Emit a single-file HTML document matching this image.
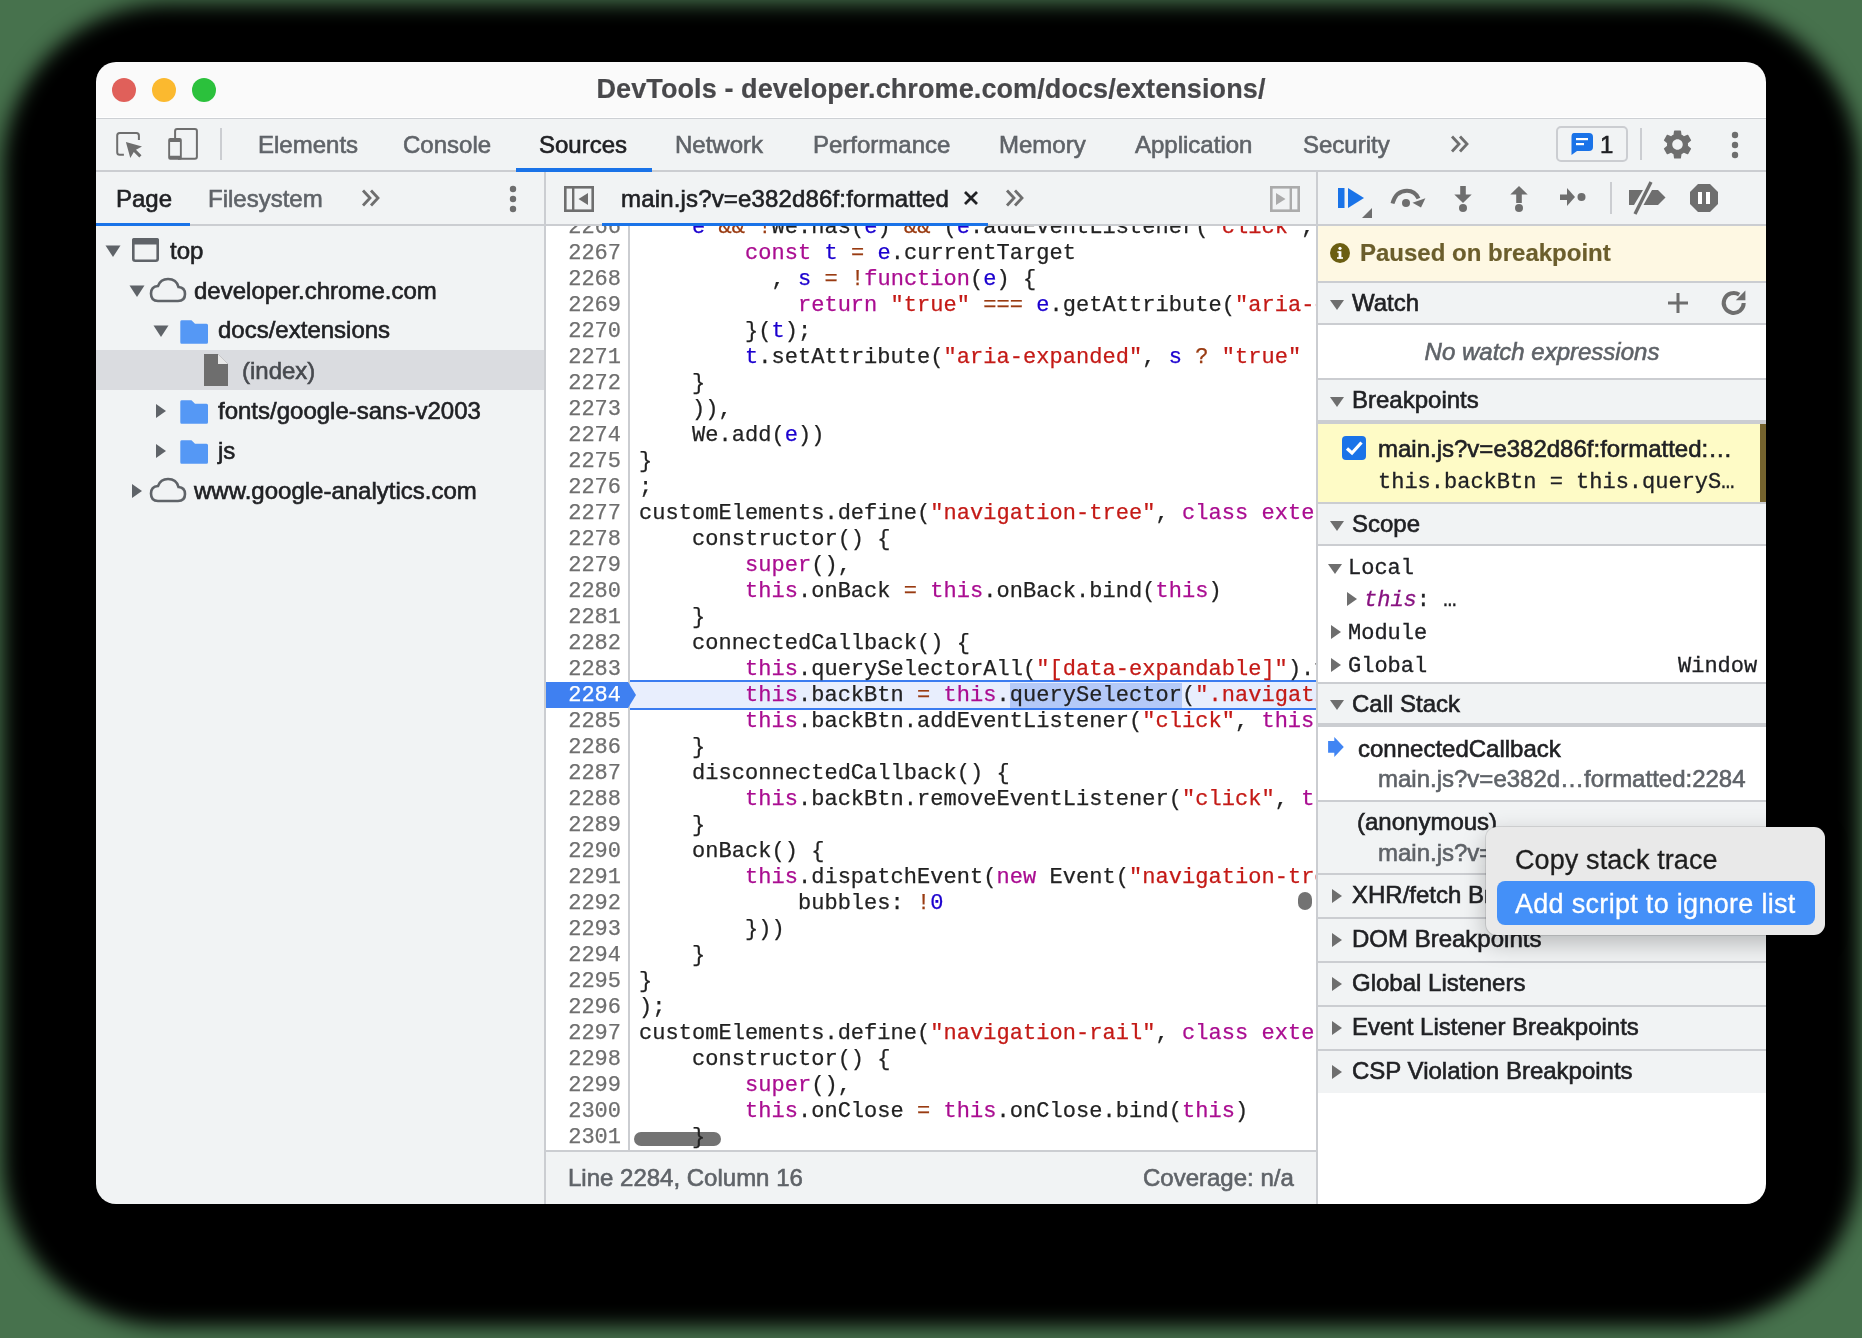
<!DOCTYPE html>
<html><head><meta charset="utf-8">
<style>
html,body{margin:0;padding:0;}
body{width:1862px;height:1338px;overflow:hidden;position:relative;background:#47724d;font-family:"Liberation Sans",sans-serif;}
.abs{position:absolute;}
#shadow{position:absolute;left:3px;top:4px;width:1856px;height:1322px;border-radius:165px;background:#000;filter:blur(10px);}
#win{will-change:transform;position:absolute;left:0;top:0;width:1862px;height:1338px;clip-path:inset(62px 96px 134px 96px round 20px);background:#f1f3f4;}
.t{position:absolute;white-space:pre;font-size:24px;color:#5f6368;line-height:30px;-webkit-text-stroke-width:0.6px;}
.m{font-family:"Liberation Mono",monospace;-webkit-text-stroke-width:0.3px;}
.hl{position:absolute;background:#cbcdd1;}
#ed{position:absolute;left:546px;top:226px;width:770px;height:924px;overflow:hidden;background:#fff;}
.ln{position:absolute;left:0;width:75px;text-align:right;font-family:"Liberation Mono",monospace;font-size:22px;line-height:26px;color:#6f6f6f;white-space:pre;-webkit-text-stroke-width:0.25px;}
.cl{position:absolute;left:93px;font-family:"Liberation Mono",monospace;font-size:22px;line-height:26px;color:#222;white-space:pre;letter-spacing:0.04px;-webkit-text-stroke-width:0.25px;}
.k{color:#aa0d91;}.s{color:#c41a16;}.v{color:#1c00cf;}.o{color:#993b12;}
.sel{background:#b4c9f8;}
.sel2284{color:#fff;}
.sh{position:absolute;left:1318px;width:448px;background:#f1f3f4;}
.tri{position:absolute;}

</style></head>
<body>
<div id="shadow"></div>
<div id="win">
  <!-- title bar -->
  <div class="abs" style="left:96px;top:62px;width:1670px;height:55px;background:#fafafa;"></div>
  <div class="abs" style="left:96px;top:117px;width:1670px;height:1px;background:#fff;"></div>
  <div class="abs" style="left:96px;top:118px;width:1670px;height:1px;background:#cdd0d4;"></div>
  <div class="abs" style="left:112px;top:78px;width:24px;height:24px;border-radius:50%;background:#e0605a;"></div>
  <div class="abs" style="left:152px;top:78px;width:24px;height:24px;border-radius:50%;background:#fbb92f;"></div>
  <div class="abs" style="left:192px;top:78px;width:24px;height:24px;border-radius:50%;background:#2bc13c;"></div>
  <div class="t" style="left:96px;width:1670px;text-align:center;top:74px;font-weight:bold;font-size:27px;color:#48484b;letter-spacing:0.1px;-webkit-text-stroke-width:0.2px;">DevTools - developer.chrome.com/docs/extensions/</div>

  <!-- toolbar -->
  <div class="hl" style="left:96px;top:170px;width:1670px;height:2px;"></div>
  <svg class="abs" style="left:114px;top:130px" width="32" height="30" viewBox="0 0 32 30">
    <path d="M9.9 24.8H5.7Q3.2 24.8 3.2 22.3V5.5Q3.2 3 5.7 3H22.4Q24.9 3 24.9 5.5V9.9" fill="none" stroke="#6e6e6e" stroke-width="2"/>
    <path d="M11.9 12L28 16.5L22 19.8L27.5 25.3L25.3 27.5L19.8 22L16.3 28Z" fill="#6e6e6e"/>
  </svg>
  <svg class="abs" style="left:166px;top:127px" width="34" height="35" viewBox="0 0 34 35">
    <path d="M9.1 11V4Q9.1 2 11.1 2H28.9Q30.9 2 30.9 4V29.8Q30.9 31.8 28.9 31.8H12" fill="none" stroke="#6e6e6e" stroke-width="2"/>
    <path fill-rule="evenodd" fill="#6e6e6e" d="M4.2 11H13.8Q15.8 11 15.8 13V30.8Q15.8 32.8 13.8 32.8H4.2Q2.2 32.8 2.2 30.8V13Q2.2 11 4.2 11ZM4.1 15V28.8H13.9V15Z"/>
  </svg>
  <div class="hl" style="left:220px;top:128px;width:2px;height:32px;"></div>
  <div class="t" style="left:258px;top:130px;">Elements</div>
  <div class="t" style="left:403px;top:130px;">Console</div>
  <div class="t" style="left:539px;top:130px;color:#202124;">Sources</div>
  <div class="abs" style="left:516px;top:168px;width:136px;height:4px;background:#1a73e8;"></div>
  <div class="t" style="left:675px;top:130px;">Network</div>
  <div class="t" style="left:813px;top:130px;">Performance</div>
  <div class="t" style="left:999px;top:130px;">Memory</div>
  <div class="t" style="left:1135px;top:130px;">Application</div>
  <div class="t" style="left:1303px;top:130px;">Security</div>
  <svg class="abs" style="left:1449px;top:134px" width="22" height="20" viewBox="0 0 22 20">
    <path d="M3 2.5L10 10L3 17.5M11 2.5L18 10L11 17.5" fill="none" stroke="#6e6e6e" stroke-width="2.8"/>
  </svg>
  <div class="abs" style="left:1556px;top:126px;width:68px;height:32px;border:2px solid #cbcdd1;border-radius:5px;"></div>
  <svg class="abs" style="left:1570px;top:132px" width="24" height="24" viewBox="0 0 24 24">
    <path d="M4 1H19Q23 1 23 5V15Q23 19 19 19H7L1.5 23V5Q1.5 1 4 1Z" fill="#1a73e8"/>
    <rect x="6" y="6" width="12" height="2.2" fill="#fff"/><rect x="6" y="11" width="8" height="2.2" fill="#fff"/>
  </svg>
  <div class="t" style="left:1600px;top:130px;color:#202124;">1</div>
  <div class="hl" style="left:1640px;top:128px;width:2px;height:32px;"></div>
  <svg class="abs" style="left:1660px;top:127px" width="35" height="35" viewBox="0 0 24 24">
    <path fill="#6e6e6e" d="M19.14 12.94c.04-.3.06-.61.06-.94 0-.32-.02-.64-.07-.94l2.03-1.58a.49.49 0 0 0 .12-.61l-1.92-3.32a.488.488 0 0 0-.59-.22l-2.39.96c-.5-.38-1.03-.7-1.62-.94l-.36-2.54a.484.484 0 0 0-.48-.41h-3.84c-.24 0-.43.17-.47.41l-.36 2.54c-.59.24-1.13.57-1.62.94l-2.39-.96c-.22-.08-.47 0-.59.22L2.74 8.87c-.12.21-.08.47.12.61l2.03 1.58c-.05.3-.09.63-.09.94s.02.64.07.94l-2.03 1.58a.49.49 0 0 0-.12.61l1.92 3.32c.12.22.37.29.59.22l2.39-.96c.5.38 1.03.7 1.62.94l.36 2.54c.05.24.24.41.48.41h3.84c.24 0 .44-.17.47-.41l.36-2.54c.59-.24 1.13-.56 1.62-.94l2.39.96c.22.08.47 0 .59-.22l1.92-3.32c.12-.22.07-.47-.12-.61l-2.01-1.58zM12 15.6c-1.98 0-3.6-1.62-3.6-3.6s1.62-3.6 3.6-3.6 3.6 1.62 3.6 3.6-1.62 3.6-3.6 3.6z"/>
  </svg>
  <svg class="abs" style="left:1729px;top:129px" width="12" height="32" viewBox="0 0 12 32">
    <circle cx="6" cy="6" r="3.2" fill="#6e6e6e"/><circle cx="6" cy="16" r="3.2" fill="#6e6e6e"/><circle cx="6" cy="26" r="3.2" fill="#6e6e6e"/>
  </svg>

  <!-- row 2 -->
  <div class="hl" style="left:96px;top:224px;width:1670px;height:2px;"></div>
  <div class="t" style="left:116px;top:184px;color:#202124;">Page</div>
  <div class="abs" style="left:96px;top:223px;width:94px;height:3px;background:#1a73e8;"></div>
  <div class="t" style="left:208px;top:184px;">Filesystem</div>
  <svg class="abs" style="left:360px;top:188px" width="22" height="20" viewBox="0 0 22 20">
    <path d="M3 2.5L10 10L3 17.5M11 2.5L18 10L11 17.5" fill="none" stroke="#6e6e6e" stroke-width="2.8"/>
  </svg>
  <svg class="abs" style="left:507px;top:183px" width="12" height="32" viewBox="0 0 12 32">
    <circle cx="6" cy="6" r="3.2" fill="#6e6e6e"/><circle cx="6" cy="16" r="3.2" fill="#6e6e6e"/><circle cx="6" cy="26" r="3.2" fill="#6e6e6e"/>
  </svg>
  <div class="hl" style="left:544px;top:172px;width:2px;height:1032px;"></div>
  <svg class="abs" style="left:563px;top:185px" width="32" height="28" viewBox="0 0 32 28">
    <rect x="2.3" y="2.3" width="27.4" height="23.4" fill="none" stroke="#6e6e6e" stroke-width="2.6"/>
    <rect x="9" y="2" width="2.4" height="24" fill="#6e6e6e"/>
    <path d="M15.5 14L25 8V20Z" fill="#6e6e6e"/>
  </svg>
  <div class="t" style="left:621px;top:184px;color:#202124;letter-spacing:0.16px;">main.js?v=e382d86f:formatted</div>
  <svg class="abs" style="left:962px;top:189px" width="18" height="18" viewBox="0 0 18 18">
    <path d="M3 3L15 15M15 3L3 15" stroke="#202124" stroke-width="2.8"/>
  </svg>
  <div class="abs" style="left:602px;top:223px;width:386px;height:3px;background:#1a73e8;"></div>
  <svg class="abs" style="left:1004px;top:188px" width="22" height="20" viewBox="0 0 22 20">
    <path d="M3 2.5L10 10L3 17.5M11 2.5L18 10L11 17.5" fill="none" stroke="#6e6e6e" stroke-width="2.8"/>
  </svg>
  <svg class="abs" style="left:1269px;top:185px" width="32" height="28" viewBox="0 0 32 28">
    <rect x="2.3" y="2.3" width="27.4" height="23.4" fill="none" stroke="#ababab" stroke-width="2.6"/>
    <rect x="20.6" y="2" width="2.4" height="24" fill="#ababab"/>
    <path d="M16.5 14L7 8V20Z" fill="#ababab"/>
  </svg>
  <div class="hl" style="left:1316px;top:172px;width:2px;height:1032px;"></div>

  <!-- left tree -->
  <div class="abs" style="left:96px;top:350px;width:448px;height:40px;background:#dadce0;"></div>
  <svg class="abs" style="left:104px;top:244px" width="18" height="14" viewBox="0 0 18 14"><path d="M1.5 1.5H16.5L9 13Z" fill="#5f6368"/></svg>
  <svg class="abs" style="left:130px;top:236px" width="32" height="28" viewBox="0 0 32 28">
    <rect x="3.3" y="3.3" width="24.4" height="21.4" rx="2" fill="none" stroke="#5f6368" stroke-width="2.6"/>
    <rect x="2" y="2" width="27" height="6.5" rx="2" fill="#5f6368"/>
  </svg>
  <div class="t" style="left:170px;top:236px;color:#202124;">top</div>
  <svg class="abs" style="left:128px;top:284px" width="18" height="14" viewBox="0 0 18 14"><path d="M1.5 1.5H16.5L9 13Z" fill="#5f6368"/></svg>
  <svg class="abs" style="left:148px;top:276px" width="40" height="28" viewBox="0 0 40 28">
    <path d="M10 25H30Q37 25 37 18Q37 11.5 30.5 11Q28.5 3 20 3Q12.5 3 10 10Q3 10.5 3 17.5Q3 25 10 25Z" fill="none" stroke="#5f6368" stroke-width="2.6"/>
  </svg>
  <div class="t" style="left:194px;top:276px;color:#202124;">developer.chrome.com</div>
  <svg class="abs" style="left:152px;top:324px" width="18" height="14" viewBox="0 0 18 14"><path d="M1.5 1.5H16.5L9 13Z" fill="#5f6368"/></svg>
  <svg class="abs" style="left:180px;top:320px" width="28" height="24" viewBox="0 0 28 24"><path d="M1.5 0.3H11.5L15 3.8H26.5Q28 3.8 28 5.3V22.2Q28 23.7 26.5 23.7H1.5Q0.3 23.7 0.3 22.2V1.8Q0.3 0.3 1.5 0.3Z" fill="#5598f5"/></svg>
  <div class="t" style="left:218px;top:315px;color:#202124;">docs/extensions</div>
  <svg class="abs" style="left:204px;top:354px" width="24" height="32" viewBox="0 0 24 32"><path d="M0 0H14L24 10V32H0Z" fill="#6e6e6e"/><path d="M14 0V10H24Z" fill="#e8e8e8"/></svg>
  <div class="t" style="left:242px;top:356px;color:#474a4f;">(index)</div>
  <svg class="abs" style="left:154px;top:402px" width="14" height="18" viewBox="0 0 14 18"><path d="M2 2V16L12 9Z" fill="#5f6368"/></svg>
  <svg class="abs" style="left:180px;top:400px" width="28" height="24" viewBox="0 0 28 24"><path d="M1.5 0.3H11.5L15 3.8H26.5Q28 3.8 28 5.3V22.2Q28 23.7 26.5 23.7H1.5Q0.3 23.7 0.3 22.2V1.8Q0.3 0.3 1.5 0.3Z" fill="#5598f5"/></svg>
  <div class="t" style="left:218px;top:396px;color:#202124;">fonts/google-sans-v2003</div>
  <svg class="abs" style="left:154px;top:442px" width="14" height="18" viewBox="0 0 14 18"><path d="M2 2V16L12 9Z" fill="#5f6368"/></svg>
  <svg class="abs" style="left:180px;top:440px" width="28" height="24" viewBox="0 0 28 24"><path d="M1.5 0.3H11.5L15 3.8H26.5Q28 3.8 28 5.3V22.2Q28 23.7 26.5 23.7H1.5Q0.3 23.7 0.3 22.2V1.8Q0.3 0.3 1.5 0.3Z" fill="#5598f5"/></svg>
  <div class="t" style="left:218px;top:436px;color:#202124;">js</div>
  <svg class="abs" style="left:130px;top:482px" width="14" height="18" viewBox="0 0 14 18"><path d="M2 2V16L12 9Z" fill="#5f6368"/></svg>
  <svg class="abs" style="left:148px;top:476px" width="40" height="28" viewBox="0 0 40 28">
    <path d="M10 25H30Q37 25 37 18Q37 11.5 30.5 11Q28.5 3 20 3Q12.5 3 10 10Q3 10.5 3 17.5Q3 25 10 25Z" fill="none" stroke="#5f6368" stroke-width="2.6"/>
  </svg>
  <div class="t" style="left:194px;top:476px;color:#202124;">www.google-analytics.com</div>

  <!-- editor -->
  <div id="ed">
    <div class="abs" style="left:82px;top:0;width:2px;height:924px;background:#cbcdd1;"></div>
    <div class="abs" style="left:84px;top:454px;width:686px;height:30px;background:#e8eefd;border-top:2px solid #3b7cf0;border-bottom:2px solid #3b7cf0;box-sizing:border-box;"></div>
    <div class="abs" style="left:88px;top:906px;width:87px;height:14px;border-radius:7px;background:#737373;"></div>
    <svg class="abs" style="left:0;top:456px" width="92" height="26" viewBox="0 0 92 26"><path d="M0 0H82L90 13L82 26H0Z" fill="#3f80f1"/></svg>
<div class="ln" style="top:-11px">2266</div><div class="cl" style="top:-11px">    <span class="v">e</span> <span class="o">&amp;&amp;</span> <span class="o">!</span>We.has(<span class="v">e</span>) <span class="o">&amp;&amp;</span> (<span class="v">e</span>.addEventListener(<span class="s">&quot;click&quot;</span>, <span class="k">this</span></div>
<div class="ln" style="top:15px">2267</div><div class="cl" style="top:15px">        <span class="k">const</span> <span class="v">t</span> <span class="o">=</span> <span class="v">e</span>.currentTarget</div>
<div class="ln" style="top:41px">2268</div><div class="cl" style="top:41px">          , <span class="v">s</span> <span class="o">=</span> <span class="o">!</span><span class="k">function</span>(<span class="v">e</span>) {</div>
<div class="ln" style="top:67px">2269</div><div class="cl" style="top:67px">            <span class="k">return</span> <span class="s">&quot;true&quot;</span> <span class="o">===</span> <span class="v">e</span>.getAttribute(<span class="s">&quot;aria-expanded&quot;</span>)</div>
<div class="ln" style="top:93px">2270</div><div class="cl" style="top:93px">        }(<span class="v">t</span>);</div>
<div class="ln" style="top:119px">2271</div><div class="cl" style="top:119px">        <span class="v">t</span>.setAttribute(<span class="s">&quot;aria-expanded&quot;</span>, <span class="v">s</span> <span class="o">?</span> <span class="s">&quot;true&quot;</span> <span class="o">:</span> <span class="s">&quot;false&quot;</span>)</div>
<div class="ln" style="top:145px">2272</div><div class="cl" style="top:145px">    }</div>
<div class="ln" style="top:171px">2273</div><div class="cl" style="top:171px">    )),</div>
<div class="ln" style="top:197px">2274</div><div class="cl" style="top:197px">    We.add(<span class="v">e</span>))</div>
<div class="ln" style="top:223px">2275</div><div class="cl" style="top:223px">}</div>
<div class="ln" style="top:249px">2276</div><div class="cl" style="top:249px">;</div>
<div class="ln" style="top:275px">2277</div><div class="cl" style="top:275px">customElements.define(<span class="s">&quot;navigation-tree&quot;</span>, <span class="k">class</span> <span class="k">extends</span> HTMLElement {</div>
<div class="ln" style="top:301px">2278</div><div class="cl" style="top:301px">    constructor() {</div>
<div class="ln" style="top:327px">2279</div><div class="cl" style="top:327px">        <span class="k">super</span>(),</div>
<div class="ln" style="top:353px">2280</div><div class="cl" style="top:353px">        <span class="k">this</span>.onBack <span class="o">=</span> <span class="k">this</span>.onBack.bind(<span class="k">this</span>)</div>
<div class="ln" style="top:379px">2281</div><div class="cl" style="top:379px">    }</div>
<div class="ln" style="top:405px">2282</div><div class="cl" style="top:405px">    connectedCallback() {</div>
<div class="ln" style="top:431px">2283</div><div class="cl" style="top:431px">        <span class="k">this</span>.querySelectorAll(<span class="s">&quot;[data-expandable]&quot;</span>).forEach(</div>
<div class="ln sel2284" style="top:457px">2284</div><div class="cl" style="top:457px">        <span class="k">this</span>.backBtn <span class="o">=</span> <span class="k">this</span>.<span class="sel">querySelector</span>(<span class="s">&quot;.navigation-tree__back&quot;</span>)</div>
<div class="ln" style="top:483px">2285</div><div class="cl" style="top:483px">        <span class="k">this</span>.backBtn.addEventListener(<span class="s">&quot;click&quot;</span>, <span class="k">this</span>.onBack)</div>
<div class="ln" style="top:509px">2286</div><div class="cl" style="top:509px">    }</div>
<div class="ln" style="top:535px">2287</div><div class="cl" style="top:535px">    disconnectedCallback() {</div>
<div class="ln" style="top:561px">2288</div><div class="cl" style="top:561px">        <span class="k">this</span>.backBtn.removeEventListener(<span class="s">&quot;click&quot;</span>, <span class="k">this</span>.onBack)</div>
<div class="ln" style="top:587px">2289</div><div class="cl" style="top:587px">    }</div>
<div class="ln" style="top:613px">2290</div><div class="cl" style="top:613px">    onBack() {</div>
<div class="ln" style="top:639px">2291</div><div class="cl" style="top:639px">        <span class="k">this</span>.dispatchEvent(<span class="k">new</span> Event(<span class="s">&quot;navigation-tree-back&quot;</span>, {</div>
<div class="ln" style="top:665px">2292</div><div class="cl" style="top:665px">            bubbles: <span class="o">!</span><span class="v">0</span></div>
<div class="ln" style="top:691px">2293</div><div class="cl" style="top:691px">        }))</div>
<div class="ln" style="top:717px">2294</div><div class="cl" style="top:717px">    }</div>
<div class="ln" style="top:743px">2295</div><div class="cl" style="top:743px">}</div>
<div class="ln" style="top:769px">2296</div><div class="cl" style="top:769px">);</div>
<div class="ln" style="top:795px">2297</div><div class="cl" style="top:795px">customElements.define(<span class="s">&quot;navigation-rail&quot;</span>, <span class="k">class</span> <span class="k">extends</span> HTMLElement {</div>
<div class="ln" style="top:821px">2298</div><div class="cl" style="top:821px">    constructor() {</div>
<div class="ln" style="top:847px">2299</div><div class="cl" style="top:847px">        <span class="k">super</span>(),</div>
<div class="ln" style="top:873px">2300</div><div class="cl" style="top:873px">        <span class="k">this</span>.onClose <span class="o">=</span> <span class="k">this</span>.onClose.bind(<span class="k">this</span>)</div>
<div class="ln" style="top:899px">2301</div><div class="cl" style="top:899px">    }</div>
    <div class="abs" style="left:752px;top:666px;width:14px;height:18px;border-radius:7px;background:#737373;"></div>
  </div>
  <div class="hl" style="left:546px;top:1150px;width:770px;height:2px;"></div>
  <div class="t" style="left:568px;top:1163px;">Line 2284, Column 16</div>
  <div class="t" style="left:1143px;top:1163px;">Coverage: n/a</div>

  <!-- debugger toolbar -->
  <svg class="abs" style="left:1336px;top:186px" width="40" height="34" viewBox="0 0 40 34">
    <rect x="2" y="2" width="6.5" height="20" fill="#1a73e8"/><path d="M12 2L28 12L12 22Z" fill="#1a73e8"/><path d="M36 22V32H26Z" fill="#6e6e6e"/>
  </svg>
  <svg class="abs" style="left:1388px;top:186px" width="40" height="26" viewBox="0 0 40 26">
    <path d="M4.5 17.5Q8 4.8 19 4.8Q27 4.8 30.5 12.5" fill="none" stroke="#6e6e6e" stroke-width="4"/>
    <path d="M24.5 16.8L37.4 12.2L33 21.6Z" fill="#6e6e6e"/><circle cx="18" cy="17" r="4" fill="#6e6e6e"/>
  </svg>
  <svg class="abs" style="left:1452px;top:185px" width="22" height="28" viewBox="0 0 22 28">
    <rect x="8.2" y="1" width="5.6" height="10" fill="#6e6e6e"/><path d="M2.3 9.5H19.7L11 18Z" fill="#6e6e6e"/><circle cx="11" cy="23" r="4" fill="#6e6e6e"/>
  </svg>
  <svg class="abs" style="left:1508px;top:185px" width="22" height="28" viewBox="0 0 22 28">
    <path d="M2.3 9.5H19.7L11 1Z" fill="#6e6e6e"/><rect x="8.2" y="9" width="5.6" height="9" fill="#6e6e6e"/><circle cx="11" cy="23" r="4" fill="#6e6e6e"/>
  </svg>
  <svg class="abs" style="left:1558px;top:186px" width="32" height="22" viewBox="0 0 32 22">
    <rect x="2" y="8.5" width="8" height="5.5" fill="#6e6e6e"/><path d="M9 2L17 11L9 20Z" fill="#6e6e6e"/><circle cx="23.5" cy="11" r="4" fill="#6e6e6e"/>
  </svg>
  <div class="hl" style="left:1610px;top:182px;width:2px;height:32px;"></div>
  <svg class="abs" style="left:1627px;top:180px" width="40" height="36" viewBox="0 0 40 36">
    <path d="M2 10H16L7 25H2Z" fill="#6e6e6e"/><path d="M16.5 25L25 10H31L38.5 17.5L31 25Z" fill="#6e6e6e"/>
    <path d="M8 34L24 2" stroke="#6e6e6e" stroke-width="3.4"/>
  </svg>
  <svg class="abs" style="left:1689px;top:183px" width="30" height="30" viewBox="0 0 30 30">
    <path d="M9 1H21L29 9V21L21 29H9L1 21V9Z" fill="#6e6e6e"/><rect x="9" y="9" width="4" height="12" fill="#fff"/><rect x="17" y="9" width="4" height="12" fill="#fff"/>
  </svg>

  <!-- right panel -->
  <div class="abs" style="left:1318px;top:226px;width:448px;height:55px;background:#fef8e3;"></div>
  <div class="hl" style="left:1318px;top:281px;width:448px;height:2px;"></div>
  <svg class="abs" style="left:1330px;top:243px" width="20" height="20" viewBox="0 0 20 20"><circle cx="10" cy="10" r="10" fill="#6b5e12"/><rect x="8.6" y="8.3" width="2.8" height="7.2" fill="#fff"/><circle cx="10" cy="5.3" r="1.6" fill="#fff"/><rect x="7" y="14.2" width="6" height="1.6" fill="#fff"/><rect x="7.3" y="8.3" width="3" height="1.5" fill="#fff"/></svg>
  <div class="t" style="left:1360px;top:238px;font-weight:bold;color:#6b5e2c;-webkit-text-stroke-width:0.2px;">Paused on breakpoint</div>

  <div class="sh" style="top:283px;height:40px;"></div>
  <div class="hl" style="left:1318px;top:323px;width:448px;height:2px;"></div>
  <svg class="tri" style="left:1329px;top:299px" width="16" height="12" viewBox="0 0 16 12"><path d="M1 1H15L8 11Z" fill="#6e6e6e"/></svg>
  <div class="t" style="left:1352px;top:288px;color:#202124;">Watch</div>
  <svg class="abs" style="left:1666px;top:291px" width="24" height="24" viewBox="0 0 24 24"><rect x="10.5" y="2" width="3" height="20" fill="#6e6e6e"/><rect x="2" y="10.5" width="20" height="3" fill="#6e6e6e"/></svg>
  <svg class="abs" style="left:1720px;top:289px" width="28" height="28" viewBox="0 0 28 28"><path d="M23.7 14A10 10 0 1 1 19.2 5.6" fill="none" stroke="#6e6e6e" stroke-width="4"/><path d="M25.4 1.6L15.8 11.2H25.4Z" fill="#6e6e6e"/></svg>

  <div class="abs" style="left:1318px;top:325px;width:448px;height:53px;background:#fff;"></div>
  <div class="t" style="left:1318px;width:448px;text-align:center;top:337px;font-style:italic;color:#5f6368;">No watch expressions</div>
  <div class="hl" style="left:1318px;top:378px;width:448px;height:2px;"></div>

  <div class="sh" style="top:380px;height:40px;"></div>
  <div class="hl" style="left:1318px;top:420px;width:448px;height:4px;"></div>
  <svg class="tri" style="left:1329px;top:396px" width="16" height="12" viewBox="0 0 16 12"><path d="M1 1H15L8 11Z" fill="#6e6e6e"/></svg>
  <div class="t" style="left:1352px;top:385px;color:#202124;">Breakpoints</div>

  <div class="abs" style="left:1318px;top:424px;width:448px;height:78px;background:#fefbc6;"></div>
  <div class="abs" style="left:1760px;top:424px;width:6px;height:78px;background:#75632e;"></div>
  <div class="abs" style="left:1342px;top:436px;width:24px;height:24px;border-radius:4px;background:#1a73e8;"></div>
  <svg class="abs" style="left:1342px;top:436px" width="24" height="24" viewBox="0 0 24 24"><path d="M5 12.5L10 17L19.5 6.5" fill="none" stroke="#fff" stroke-width="3.2"/></svg>
  <div class="t" style="left:1378px;top:434px;color:#202124;">main.js?v=e382d86f:formatted:…</div>
  <div class="t m" style="left:1378px;top:468px;font-size:22px;color:#202124;">this.backBtn = this.queryS…</div>
  <div class="hl" style="left:1318px;top:502px;width:448px;height:2px;"></div>

  <div class="sh" style="top:504px;height:40px;"></div>
  <div class="hl" style="left:1318px;top:544px;width:448px;height:2px;"></div>
  <svg class="tri" style="left:1329px;top:520px" width="16" height="12" viewBox="0 0 16 12"><path d="M1 1H15L8 11Z" fill="#6e6e6e"/></svg>
  <div class="t" style="left:1352px;top:509px;color:#202124;">Scope</div>

  <div class="abs" style="left:1318px;top:546px;width:448px;height:136px;background:#fff;"></div>
  <svg class="tri" style="left:1327px;top:563px" width="16" height="12" viewBox="0 0 16 12"><path d="M1 1H15L8 11Z" fill="#6e6e6e"/></svg>
  <div class="t m" style="left:1348px;top:554px;font-size:22px;color:#202124;">Local</div>
  <svg class="tri" style="left:1346px;top:591px" width="12" height="16" viewBox="0 0 12 16"><path d="M1 1V15L11 8Z" fill="#6e6e6e"/></svg>
  <div class="t m" style="left:1364px;top:586px;font-size:22px;color:#202124;"><span style="color:#881280;font-style:italic;">this</span>: …</div>
  <svg class="tri" style="left:1330px;top:624px" width="12" height="16" viewBox="0 0 12 16"><path d="M1 1V15L11 8Z" fill="#6e6e6e"/></svg>
  <div class="t m" style="left:1348px;top:619px;font-size:22px;color:#202124;">Module</div>
  <svg class="tri" style="left:1330px;top:657px" width="12" height="16" viewBox="0 0 12 16"><path d="M1 1V15L11 8Z" fill="#6e6e6e"/></svg>
  <div class="t m" style="left:1348px;top:652px;font-size:22px;color:#202124;">Global</div>
  <div class="t m" style="left:1678px;top:652px;font-size:22px;color:#202124;">Window</div>
  <div class="hl" style="left:1318px;top:682px;width:448px;height:2px;"></div>

  <div class="sh" style="top:684px;height:39px;"></div>
  <div class="hl" style="left:1318px;top:723px;width:448px;height:4px;"></div>
  <svg class="tri" style="left:1329px;top:699px" width="16" height="12" viewBox="0 0 16 12"><path d="M1 1H15L8 11Z" fill="#6e6e6e"/></svg>
  <div class="t" style="left:1352px;top:689px;color:#202124;">Call Stack</div>

  <div class="abs" style="left:1318px;top:727px;width:448px;height:73px;background:#fff;"></div>
  <svg class="abs" style="left:1327px;top:736px" width="18" height="22" viewBox="0 0 18 22"><path d="M1.1 5H7.3V1L16.8 10.9L7.3 21V16.7H1.1Z" fill="#4185f3"/></svg>
  <div class="t" style="left:1358px;top:734px;color:#202124;">connectedCallback</div>
  <div class="t" style="left:1378px;top:764px;color:#5f6368;">main.js?v=e382d…formatted:2284</div>
  <div class="hl" style="left:1318px;top:800px;width:448px;height:2px;"></div>

  <div class="sh" style="top:802px;height:71px;"></div>
  <div class="t" style="left:1357px;top:807px;color:#202124;">(anonymous)</div>
  <div class="t" style="left:1378px;top:838px;color:#5f6368;">main.js?v=e382d…formatted:2284</div>
  <div class="hl" style="left:1318px;top:873px;width:448px;height:2px;"></div>
  <div class="sh" style="top:875px;height:42px;"></div>
  <svg class="tri" style="left:1331px;top:888px" width="12" height="16" viewBox="0 0 12 16"><path d="M1 1V15L11 8Z" fill="#6e6e6e"/></svg>
  <div class="t" style="left:1352px;top:880px;color:#202124;">XHR/fetch Breakpoints</div>
  <div class="hl" style="left:1318px;top:917px;width:448px;height:2px;"></div>
  <div class="sh" style="top:919px;height:42px;"></div>
  <svg class="tri" style="left:1331px;top:932px" width="12" height="16" viewBox="0 0 12 16"><path d="M1 1V15L11 8Z" fill="#6e6e6e"/></svg>
  <div class="t" style="left:1352px;top:924px;color:#202124;">DOM Breakpoints</div>
  <div class="hl" style="left:1318px;top:961px;width:448px;height:2px;"></div>
  <div class="sh" style="top:963px;height:42px;"></div>
  <svg class="tri" style="left:1331px;top:976px" width="12" height="16" viewBox="0 0 12 16"><path d="M1 1V15L11 8Z" fill="#6e6e6e"/></svg>
  <div class="t" style="left:1352px;top:968px;color:#202124;">Global Listeners</div>
  <div class="hl" style="left:1318px;top:1005px;width:448px;height:2px;"></div>
  <div class="sh" style="top:1007px;height:42px;"></div>
  <svg class="tri" style="left:1331px;top:1020px" width="12" height="16" viewBox="0 0 12 16"><path d="M1 1V15L11 8Z" fill="#6e6e6e"/></svg>
  <div class="t" style="left:1352px;top:1012px;color:#202124;">Event Listener Breakpoints</div>
  <div class="hl" style="left:1318px;top:1049px;width:448px;height:2px;"></div>
  <div class="sh" style="top:1051px;height:42px;"></div>
  <svg class="tri" style="left:1331px;top:1064px" width="12" height="16" viewBox="0 0 12 16"><path d="M1 1V15L11 8Z" fill="#6e6e6e"/></svg>
  <div class="t" style="left:1352px;top:1056px;color:#202124;">CSP Violation Breakpoints</div>
  <div class="abs" style="left:1318px;top:1093px;width:448px;height:111px;background:#fff;"></div>
</div>

<!-- context menu -->
<div style="position:absolute;left:0;top:0;width:1862px;height:1338px;will-change:transform;">
<div class="abs" style="left:1486px;top:827px;width:339px;height:108px;border-radius:11px;background:#e9e9e9;box-shadow:0 0 0 1px rgba(0,0,0,0.10),0 8px 24px rgba(0,0,0,0.25);"></div>
<div class="abs" style="left:1497px;top:881px;width:318px;height:44px;border-radius:8px;background:#4490f8;"></div>
<div class="t" style="left:1515px;top:845px;font-size:27px;color:#1e1e1e;letter-spacing:0.1px;-webkit-text-stroke:0.3px #1e1e1e;">Copy stack trace</div>
<div class="t" style="left:1515px;top:889px;font-size:27px;color:#fff;letter-spacing:0.3px;-webkit-text-stroke:0.3px #fff;">Add script to ignore list</div>
</div>
</body></html>
